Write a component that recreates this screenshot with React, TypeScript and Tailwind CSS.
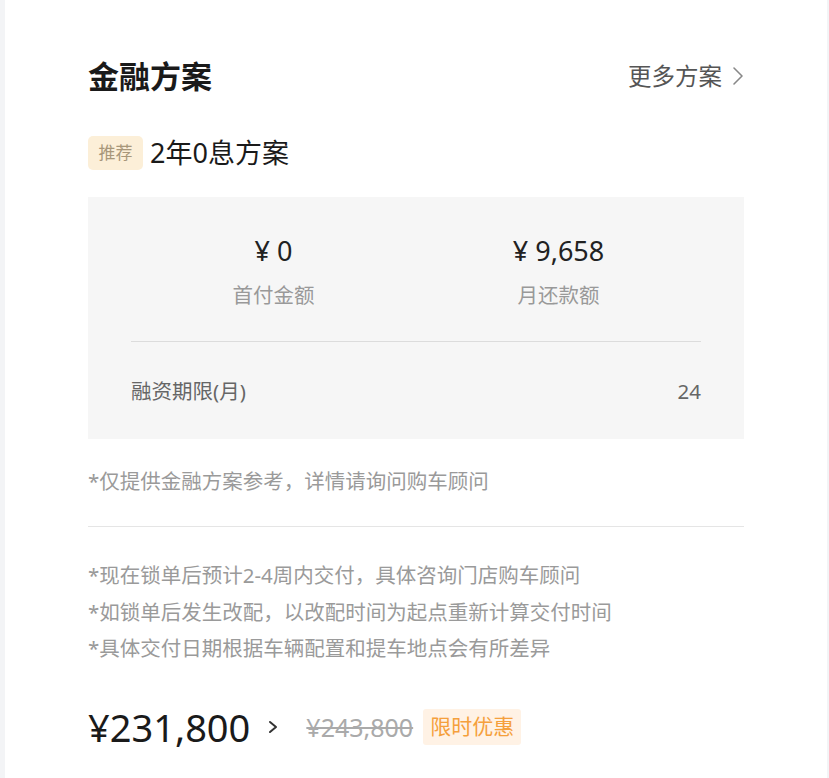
import React from "react";

const font = { fontFamily: '"Noto Sans", "Noto Sans CJK SC", sans-serif' };

export default function App() {
  return (
    <div className="min-h-screen bg-[#f3f4f6] pl-[5px] pr-[2px]" style={font}>
      <div className="bg-white min-h-[778px] px-[83px] pt-[56px]">
        {/* header */}
        <div className="flex h-[40px] items-center justify-between">
          <div className="text-[31px] font-bold leading-[40px] text-[#1a1a1a]">金融方案</div>
          <div className="flex items-center gap-[10px] text-[23.5px] leading-[32px] text-[#555]">
            <span>更多方案</span>
            <svg width="12" height="20" viewBox="0 0 12 20" fill="none">
              <polyline points="2,2 10,10 2,18" stroke="#888" strokeWidth="1.6" strokeLinejoin="round" strokeLinecap="round" />
            </svg>
          </div>
        </div>

        {/* plan */}
        <div className="mt-[40px] flex h-[34px] items-center gap-[7px]">
          <span className="flex h-[34px] w-[55px] items-center justify-center rounded-[5px] bg-[#fcefd8] text-[17px] text-[#a8977a]">
            推荐
          </span>
          <span className="text-[27px] leading-[34px] text-[#1a1a1a]">2年0息方案</span>
        </div>

        {/* box */}
        <div className="mt-[27px] bg-[#f6f6f6] px-[43px] pb-[34px] pt-[38px]">
          <div className="grid grid-cols-2">
            <div className="flex flex-col items-center">
              <div className="text-[27px] leading-[32px] text-[#222]">¥ 0</div>
              <div className="mt-[14px] text-[20.5px] leading-[28px] text-[#999]">首付金额</div>
            </div>
            <div className="flex flex-col items-center">
              <div className="text-[27px] leading-[32px] text-[#222]">¥ 9,658</div>
              <div className="mt-[14px] text-[20.5px] leading-[28px] text-[#999]">月还款额</div>
            </div>
          </div>
          <div className="mt-[32px] h-px bg-[#dcdcdc]" />
          <div className="mt-[35px] flex items-center justify-between text-[20.5px] leading-[28px] text-[#666]">
            <span>融资期限(月)</span>
            <span>24</span>
          </div>
        </div>

        <div className="mt-[28px] text-[20.5px] leading-[28px] text-[#9a9a9a]">*仅提供金融方案参考，详情请询问购车顾问</div>

        <div className="mt-[31px] h-px bg-[#e5e5e5]" />

        <div className="mt-[30px] flex flex-col text-[20.5px] leading-[36.5px] text-[#9a9a9a]">
          <div>*现在锁单后预计2-4周内交付，具体咨询门店购车顾问</div>
          <div>*如锁单后发生改配，以改配时间为起点重新计算交付时间</div>
          <div>*具体交付日期根据车辆配置和提车地点会有所差异</div>
        </div>

        {/* price */}
        <div className="mt-[38px] flex h-[44px] items-center">
          <span className="text-[38px] leading-[44px] text-[#1a1a1a]">¥231,800</span>
          <svg className="ml-[18px]" width="10" height="14" viewBox="0 0 10 14" fill="none">
            <polyline points="2,2 8,7 2,12" stroke="#333" strokeWidth="2" strokeLinejoin="round" strokeLinecap="round" />
          </svg>
          <span className="ml-[28px] text-[25px] leading-[30px] text-[#aaa] line-through">¥243,800</span>
          <span className="ml-[10px] flex h-[36px] items-center rounded-[3px] bg-[#fff2e5] px-[7px] text-[21px] text-[#f5a03c]">
            限时优惠
          </span>
        </div>
      </div>
    </div>
  );
}
